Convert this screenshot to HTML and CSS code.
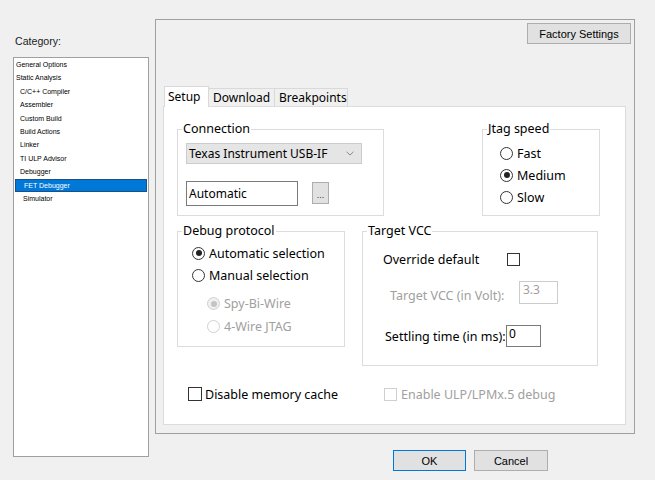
FILE: index.html
```html
<!DOCTYPE html>
<html>
<head>
<meta charset="utf-8">
<link rel="stylesheet" href="styles.css">
</head>
<body>
<div class="dialog">
  <div class="left">
    <div class="cat-label">Category:</div>
    <ul class="cat-list">
      <li class="l0">General Options</li>
      <li class="l0">Static Analysis</li>
      <li class="l1">C/C++ Compiler</li>
      <li class="l1">Assembler</li>
      <li class="l1">Custom Build</li>
      <li class="l1">Build Actions</li>
      <li class="l1">Linker</li>
      <li class="l1">TI ULP Advisor</li>
      <li class="l1">Debugger</li>
      <li class="l2 selected">FET Debugger</li>
      <li class="l2">Simulator</li>
    </ul>
  </div>
  <div class="panel">
    <div class="panel-top"><button class="btn factory">Factory Settings</button></div>
    <div class="tabs">
      <div class="tab-strip">
        <span class="tab active tab-setup">Setup</span>
        <span class="tab tab-download">Download</span>
        <span class="tab tab-break">Breakpoints</span>
      </div>
      <div class="tab-body">
        <div class="row row1">
          <fieldset class="group conn">
            <legend>Connection</legend>
            <div class="gb">
              <div class="combo"><span>Texas Instrument USB-IF</span>
                <svg class="chev" width="8" height="5" viewBox="0 0 8 5"><path d="M0.5 0.8 L4 4 L7.5 0.8" fill="none" stroke="#8a8a8a" stroke-width="1"/></svg>
              </div>
              <div class="conn-row">
                <div class="textbox auto">Automatic</div>
                <button class="btn dots">...</button>
              </div>
            </div>
          </fieldset>
          <fieldset class="group jtag">
            <legend>Jtag speed</legend>
            <div class="gb">
              <div class="radio"><span class="rb"></span>Fast</div>
              <div class="radio"><span class="rb checked"></span>Medium</div>
              <div class="radio"><span class="rb"></span>Slow</div>
            </div>
          </fieldset>
        </div>
        <div class="row row2">
          <fieldset class="group debug">
            <legend>Debug protocol</legend>
            <div class="gb">
              <div class="radio"><span class="rb checked"></span>Automatic selection</div>
              <div class="radio"><span class="rb"></span>Manual selection</div>
              <div class="sub">
                <div class="radio disabled"><span class="rb checked"></span>Spy-Bi-Wire</div>
                <div class="radio disabled"><span class="rb"></span>4-Wire JTAG</div>
              </div>
            </div>
          </fieldset>
          <fieldset class="group vcc">
            <legend>Target VCC</legend>
            <div class="gb">
              <div class="vrow vrow1"><span class="vlabel">Override default</span><span class="cb"></span></div>
              <div class="vrow vrow2"><span class="vlabel disabled-text">Target VCC (in Volt):</span><div class="textbox volt">3.3</div></div>
              <div class="vrow vrow3"><span class="vlabel">Settling time (in ms):</span><div class="textbox settle">0</div></div>
            </div>
          </fieldset>
        </div>
        <div class="row row3">
          <div class="cb-item first"><span class="cb"></span>Disable memory cache</div>
          <div class="cb-item disabled-text"><span class="cb dis"></span>Enable ULP/LPMx.5 debug</div>
        </div>
      </div>
    </div>
  </div>
  <div class="footer">
    <button class="btn ok">OK</button>
    <button class="btn cancel">Cancel</button>
  </div>
</div>
</body>
</html>
```
FILE: styles.css
```css
* { box-sizing: border-box; }
html, body { margin: 0; padding: 0; }
body {
  background: #f0f0f0;
  font-family: "Noto Sans", "Open Sans", sans-serif;
  color: #000;
  width: 655px;
  height: 480px;
  overflow: hidden;
}
.dialog {
  display: grid;
  grid-template-columns: 136px 480px;
  grid-template-rows: auto 1fr;
  column-gap: 6px;
  padding-left: 13px;
  width: 655px;
  height: 480px;
}
.left { grid-row: 1 / span 2; padding-top: 33px; }
.cat-label {
  font: 10.6px/16px "Liberation Sans", sans-serif;
  color: #222;
  height: 16px;
  margin-bottom: 8px;
  padding-left: 2px;
}
.cat-list {
  height: 400px;
  margin: 0;
  padding: 0;
  list-style: none;
  background: #fff;
  border: 1px solid #a0a0a0;
  font: 7px/13.4px "Liberation Sans", sans-serif;
  color: #000;
}
.cat-list li { white-space: nowrap; height: 13.4px; }
.cat-list .l0 { padding-left: 2px; }
.cat-list .l1 { padding-left: 6px; }
.cat-list .l2 { padding-left: 9px; }
.cat-list .selected {
  margin: 0 1px;
  padding-left: 9px;
  background: #0078d7;
  color: #fff;
  outline: 1px solid #1c4f86;
  outline-offset: -1px;
}

.panel {
  margin-top: 19px;
  height: 415px;
  border: 1px solid #a0a0a0;
  display: flex;
  flex-direction: column;
  padding: 3px 3px 8px 7px;
}
.panel-top { display: flex; justify-content: flex-end; }
.btn {
  font: 11px "Liberation Sans", sans-serif;
  color: #000;
  background: #e1e1e1;
  border: 1px solid #adadad;
  padding: 0;
  margin: 0;
}
.factory { width: 104px; height: 21px; }

.tabs {
  margin-top: 42px;
  margin-right: 5px;
  flex: 1;
  display: flex;
  flex-direction: column;
}
.tab-strip {
  display: flex;
  align-items: flex-end;
  height: 20px;
  padding-left: 1px;
}
.tab {
  height: 18px;
  border: 1px solid #d9d9d9;
  border-bottom: none;
  background: #f0f0f0;
  font-size: 12px;
  line-height: 17px;
  white-space: nowrap;
  margin-left: -1px;
}
.tab.active {
  height: 21px;
  background: #fff;
  margin-bottom: -1px;
  margin-left: 0;
  position: relative;
  z-index: 1;
  line-height: 19px;
}
.tab-setup { width: 45px; padding-left: 3px; }
.tab-download { width: 67px; padding-left: 4px; }
.tab-break { width: 74px; padding-left: 4px; }

.tab-body {
  flex: 1;
  background: #fff;
  border: 1px solid #dcdcdc;
  padding: 14px 0 0 13px;
  font-size: 12px;
}
.row { display: flex; align-items: flex-start; }
.group {
  margin: 0;
  min-width: 0;
  border: 1px solid #dcdcdc;
  padding: 0;
}
.group legend {
  font-size: 12.5px;
  line-height: 16px;
  padding: 0 1px;
  margin-left: 4px;
}
.conn { width: 207px; }
.conn .gb { padding: 6px 0 9px 8px; }
.jtag { width: 118px; margin-left: 98px; align-self: stretch; }
.jtag .gb { padding: 5px 0 7px 17px; }
.combo {
  width: 176px;
  height: 21px;
  background: #e5e5e5;
  border: 1px solid #cccccc;
  display: flex;
  align-items: center;
  justify-content: space-between;
  padding: 0 7px 0 2px;
  line-height: 19px;
  white-space: nowrap;
}
.conn-row { display: flex; align-items: flex-start; margin-top: 17px; }
.textbox {
  background: #fff;
  border: 1px solid #7a7a7a;
  white-space: nowrap;
}
.auto { width: 112px; height: 25px; line-height: 23px; padding-left: 2px; }
.dots { width: 17px; height: 22px; margin-left: 14px; margin-top: 1px; font-size: 9px; line-height: 24px; color: #333; }

.radio { display: flex; align-items: center; height: 22px; white-space: nowrap; font-size: 12.5px; }
.rb {
  width: 13px;
  height: 13px;
  border: 1px solid #333;
  border-radius: 50%;
  display: flex;
  align-items: center;
  justify-content: center;
  margin-right: 4px;
  flex: none;
  background: #fff;
}
.rb.checked::after {
  content: "";
  width: 6px;
  height: 6px;
  border-radius: 50%;
  background: #222;
}
.radio.disabled { color: #a0a0a0; }
.radio.disabled .rb { border-color: #d0d0d0; }
.radio.disabled .rb.checked { background: #f0f0f0; }
.radio.disabled .rb.checked::after { background: #c4c4c4; }

.row2 { margin-top: 7px; }
.debug { width: 168px; }
.debug .gb { padding: 3px 0 8px 14px; }
.sub { padding-left: 15px; margin-top: 6px; }
.sub .radio { height: 23px; }
.vcc { width: 236px; margin-left: 17px; }
.vcc .gb { padding: 9px 0 18px 20px; }
.vrow { display: flex; white-space: nowrap; font-size: 12.5px; }
.vrow1 { height: 22px; align-items: center; }
.vrow1 .vlabel { width: 124px; }
.cb {
  width: 13px;
  height: 13px;
  border: 1px solid #333;
  background: #fff;
  flex: none;
}
.cb.dis { border-color: #d0d0d0; }
.vrow2 { margin-top: 11px; align-items: flex-start; }
.vrow2 .vlabel { margin-left: 7px; width: 129px; padding-top: 7px; line-height: 16px; }
.disabled-text { color: #a0a0a0; }
.volt { width: 39px; height: 23px; border-color: #cccccc; color: #a0a0a0; padding-left: 3px; line-height: 16px; font-size: 12px; }
.vrow3 { margin-top: 21px; align-items: flex-start; }
.vrow3 .vlabel { margin-left: 2px; width: 121px; padding-top: 4px; line-height: 16px; }
.settle { width: 35px; height: 22px; padding-left: 2px; line-height: 16px; font-size: 12px; }

.row3 { margin-top: 17px; height: 22px; align-items: center; padding-left: 11px; font-size: 12.5px; }
.cb-item { display: flex; align-items: center; white-space: nowrap; }
.cb-item .cb { width: 14px; height: 14px; margin-right: 3px; }
.cb-item .cb.dis { width: 13px; height: 13px; margin-right: 4px; }
.cb-item.first { width: 196px; }

.footer {
  grid-column: 2;
  display: flex;
  align-items: flex-start;
  padding-left: 238px;
  padding-top: 16px;
}
.ok { width: 73px; height: 21px; border-color: #0078d7; }
.cancel { width: 74px; height: 21px; margin-left: 8px; }
```
